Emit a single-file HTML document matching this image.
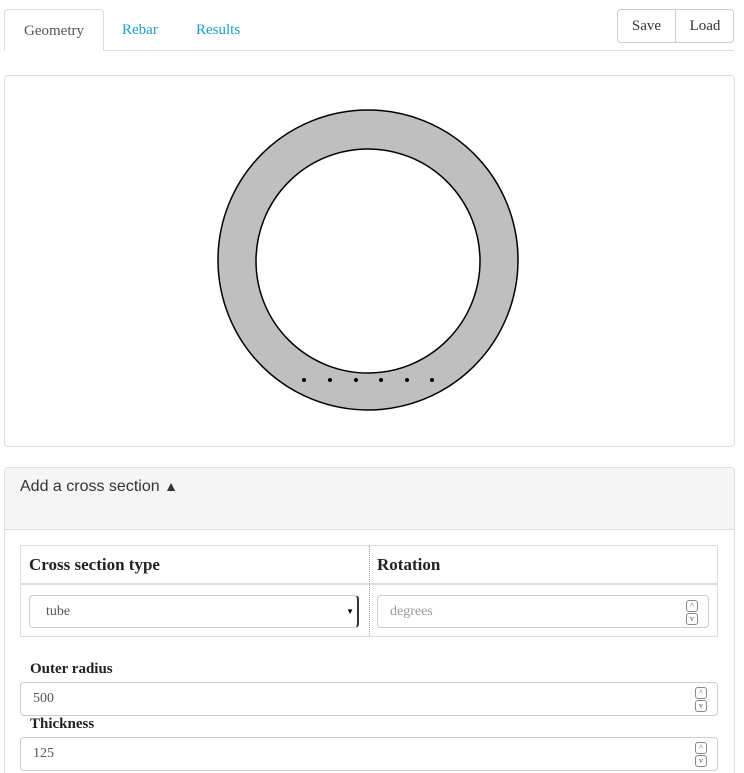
<!DOCTYPE html><html><head><style>
html,body{margin:0;width:744px;height:773px;overflow:hidden;background:#fff;font-family:"Liberation Serif",serif;position:relative}
.a{position:absolute;box-sizing:border-box}
.inp{border:1px solid #ccc;border-radius:4px;font-size:14px;color:#555;padding-left:12px;display:flex;align-items:center}
.sp{position:absolute;right:10px;width:12px;font-size:8px;line-height:9px;color:#555}
.sp i{display:block;border:1px solid #888;border-radius:3px;height:10px;margin-bottom:1px;text-align:center;font-style:normal}
.lbl{font-weight:bold;font-size:16px;color:#222}
</style></head><body>
<div class="a" style="left:4px;top:50px;width:730px;border-top:1px solid #ddd"></div>
<div class="a" style="left:4px;top:9px;width:100px;height:42px;border:1px solid #ddd;border-bottom:none;border-radius:4px 4px 0 0;background:#fff;color:#555;font-size:15px;text-align:center;line-height:42px">Geometry</div>
<div class="a" style="left:122px;top:10px;line-height:41px;font-size:15px;color:#1a9fd0">Rebar</div>
<div class="a" style="left:196px;top:10px;line-height:41px;font-size:15px;color:#1a9fd0">Results</div>
<div class="a" style="left:617px;top:9px;width:117px;height:34px;border:1px solid #ccc;border-radius:4px;font-size:15px;color:#333;line-height:32px"><span style="position:absolute;left:0;width:57px;text-align:center">Save</span><span style="position:absolute;left:57px;top:0;bottom:0;border-left:1px solid #ccc"></span><span style="position:absolute;left:58px;width:58px;text-align:center">Load</span></div>
<div class="a" style="left:4px;top:75px;width:731px;height:372px;border:1px solid #ddd;border-radius:4px"></div>
<svg class="a" style="left:0;top:0" width="744" height="460">
<circle cx="368" cy="260" r="150" fill="#bfbfbf" stroke="#000" stroke-width="1.5"/>
<circle cx="368" cy="261" r="112" fill="#fff" stroke="#000" stroke-width="1.5"/>
<g fill="#000"><circle cx="304" cy="380" r="2"/><circle cx="330" cy="380" r="2"/><circle cx="356" cy="380" r="2"/><circle cx="381" cy="380" r="2"/><circle cx="407" cy="380" r="2"/><circle cx="432" cy="380" r="2"/></g>
</svg>
<div class="a" style="left:4px;top:467px;width:731px;height:340px;border:1px solid #ddd;border-radius:4px"></div>
<div class="a" style="left:5px;top:468px;width:729px;height:62px;background:#f5f5f5;border-bottom:1px solid #ddd;border-radius:4px 4px 0 0"></div>
<div class="a" style="left:20px;top:478px;font-family:'Liberation Sans',sans-serif;font-size:16px;color:#333">Add a cross section <span style="font-size:14px">▲</span></div>
<div class="a" style="left:20px;top:545px;width:698px;height:92px;border:1px solid #ddd"></div>
<div class="a" style="left:21px;top:583px;width:696px;border-top:2px solid #ddd"></div>
<div class="a" style="left:369px;top:546px;height:90px;border-left:1px dotted #aaa"></div>
<div class="a lbl" style="left:29px;top:555px;font-size:17px">Cross section type</div>
<div class="a lbl" style="left:377px;top:555px;font-size:17px">Rotation</div>
<div class="a inp" style="left:29px;top:595px;width:330px;height:33px;padding-left:16px;border-right:2px solid #333">tube<span style="position:absolute;right:3px;font-size:8px;color:#000">▼</span></div>
<div class="a inp" style="left:377px;top:595px;width:332px;height:33px;color:#999">degrees<div class="sp" style="top:4px"><i>^</i><i>v</i></div></div>
<div class="a lbl" style="left:30px;top:661px;font-size:15px">Outer radius</div>
<div class="a inp" style="left:20px;top:682px;width:698px;height:34px">500<div class="sp" style="top:4px"><i>^</i><i>v</i></div></div>
<div class="a lbl" style="left:30px;top:716px;font-size:15px">Thickness</div>
<div class="a inp" style="left:20px;top:737px;width:698px;height:34px">125<div class="sp" style="top:4px"><i>^</i><i>v</i></div></div>
</body></html>
